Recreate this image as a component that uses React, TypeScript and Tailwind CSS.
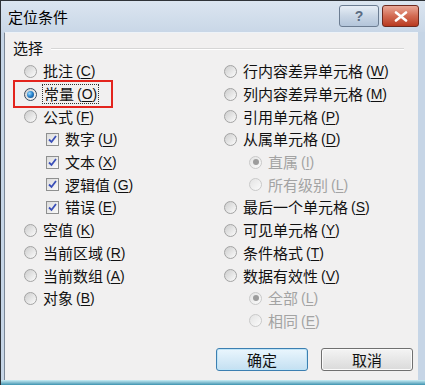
import React from "react";

type Item = {
  label: string;
  key: string;
  kind: "radio" | "check";
  checked?: boolean;
  disabled?: boolean;
  indent?: boolean;
  focus?: boolean;
};

const left: Item[] = [
  { label: "批注", key: "C", kind: "radio" },
  { label: "常量", key: "O", kind: "radio", checked: true, focus: true },
  { label: "公式", key: "F", kind: "radio" },
  { label: "数字", key: "U", kind: "check", checked: true, indent: true },
  { label: "文本", key: "X", kind: "check", checked: true, indent: true },
  { label: "逻辑值", key: "G", kind: "check", checked: true, indent: true },
  { label: "错误", key: "E", kind: "check", checked: true, indent: true },
  { label: "空值", key: "K", kind: "radio" },
  { label: "当前区域", key: "R", kind: "radio" },
  { label: "当前数组", key: "A", kind: "radio" },
  { label: "对象", key: "B", kind: "radio" },
];

const right: Item[] = [
  { label: "行内容差异单元格", key: "W", kind: "radio" },
  { label: "列内容差异单元格", key: "M", kind: "radio" },
  { label: "引用单元格", key: "P", kind: "radio" },
  { label: "从属单元格", key: "D", kind: "radio" },
  { label: "直属", key: "I", kind: "radio", checked: true, disabled: true, indent: true },
  { label: "所有级别", key: "L", kind: "radio", disabled: true, indent: true },
  { label: "最后一个单元格", key: "S", kind: "radio" },
  { label: "可见单元格", key: "Y", kind: "radio" },
  { label: "条件格式", key: "T", kind: "radio" },
  { label: "数据有效性", key: "V", kind: "radio" },
  { label: "全部", key: "L", kind: "radio", checked: true, disabled: true, indent: true },
  { label: "相同", key: "E", kind: "radio", disabled: true, indent: true },
];

function Radio({ checked, disabled }: { checked?: boolean; disabled?: boolean }) {
  if (disabled) {
    return (
      <span className="inline-flex w-[13px] h-[13px] shrink-0 items-center justify-center rounded-full border border-[#c9c9c9] bg-gradient-to-br from-[#e3e3e3] to-[#fbfbfb]">
        {checked && <span className="w-[6px] h-[6px] rounded-full bg-[#9c9c9c]" />}
      </span>
    );
  }
  return (
    <span
      className={
        "inline-flex w-[13px] h-[13px] shrink-0 items-center justify-center rounded-full border bg-gradient-to-br from-[#cdcdcd] to-[#fcfcfc] " +
        (checked ? "border-[#3b4a5c]" : "border-[#a3a3a3]")
      }
    >
      {checked && (
        <span className="w-[7px] h-[7px] rounded-full bg-[radial-gradient(circle_at_35%_35%,#9fdcff_0%,#2a86d0_45%,#0b3f7a_100%)]" />
      )}
    </span>
  );
}

function Check() {
  return (
    <span className="inline-flex w-[13px] h-[13px] shrink-0 items-center justify-center border border-[#8e8f8f] bg-gradient-to-br from-[#dcdcdc] to-[#fafafa]">
      <svg width="9" height="9" viewBox="0 0 9 9">
        <path d="M1 4.5 L3.5 7 L8 1" fill="none" stroke="#3a4fb8" strokeWidth="1.8" />
      </svg>
    </span>
  );
}

function Row({ it, rightCol }: { it: Item; rightCol?: boolean }) {
  const color = it.disabled ? "text-[#a3a3a3]" : "text-[#111]";
  return (
    <div
      className={
        "flex items-center h-[22.7px] " +
        (it.indent ? (rightCol ? "pl-[25px]" : "pl-[22px]") : "")
      }
    >
      {it.kind === "radio" ? <Radio checked={it.checked} disabled={it.disabled} /> : <Check />}
      <span
        className={
          "flex items-center ml-[6px] " +
          color +
          (it.focus ? " outline outline-1 outline-dotted outline-[#333] outline-offset-0 px-[1px]" : "")
        }
      >
        <span className="text-[15px] leading-[18px]">{it.label}</span>
        <span className="ml-[3px] text-[14px] leading-[18px] font-['Liberation_Sans',sans-serif]">
          (<span className="underline underline-offset-2">{it.key}</span>)
        </span>
      </span>
    </div>
  );
}

export default function App() {
  return (
    <div className="w-[425px] h-[385px] overflow-hidden bg-[#c6d5e6] border-t border-l border-[#2f3338] font-['Noto_Sans_CJK_SC',sans-serif] relative">
      {/* title bar */}
      <div className="h-[31px] flex items-start bg-gradient-to-b from-[#dbe5f0] to-[#c9d7e7]">
        <div className="pl-[7px] pt-[6px] text-[15px] leading-[20px] text-black">定位条件</div>
        <div className="ml-auto flex gap-[3px] pt-[4px] pr-[6px]">
          <div className="w-[40px] h-[22px] rounded-[3px] border border-[#6c7d92] bg-gradient-to-b from-[#e7eef6] via-[#c9d6e5] to-[#b3c5da] flex items-center justify-center text-[#5b6c82] text-[14px] font-bold font-['Liberation_Sans',sans-serif] leading-none">
            ?
          </div>
          <div className="w-[37px] h-[22px] rounded-[3px] border border-[#6e2a1f] bg-gradient-to-b from-[#e9a898] via-[#d26a52] to-[#b8391f] flex items-center justify-center">
            <svg width="14" height="11" viewBox="0 0 14 11">
              <path d="M2 1.5 L12 9.5 M12 1.5 L2 9.5" stroke="#fff" strokeWidth="2.6" strokeLinecap="round" />
            </svg>
          </div>
        </div>
      </div>
      {/* body */}
      <div className="ml-[3px] w-[414px] h-[348px] bg-[#f1f0f0] border-l border-[#7b8796] border-t border-t-[#eef3f8] relative">
        <div className="h-[27px] pt-[3px] flex items-center pl-[8px] pr-[14px]">
          <span className="text-[15px] leading-[18px] text-[#111]">选择</span>
          <div className="flex-1 ml-[8px] mt-[2px] h-[2px] border-t border-[#d6d6d6] border-b border-b-white" />
        </div>
        <div className="flex pl-[19px]">
          <div className="w-[200px] flex flex-col">
            {left.map((it, i) => (
              <Row key={i} it={it} />
            ))}
          </div>
          <div className="flex flex-col">
            {right.map((it, i) => (
              <Row key={i} it={it} rightCol />
            ))}
          </div>
        </div>
        <div className="flex justify-end gap-[13px] pr-[5px] mt-[16px]">
          <button className="w-[92px] h-[23px] rounded-[3px] border border-[#3c7fb1] bg-gradient-to-b from-[#eaf6fd] to-[#c4e0f2] text-[15px] leading-none text-[#111] shadow-[inset_0_0_0_1px_#bfe4f7]">
            确定
          </button>
          <button className="w-[92px] h-[23px] rounded-[3px] border border-[#707070] bg-gradient-to-b from-[#f4f4f4] to-[#dadada] text-[15px] leading-none text-[#111] shadow-[inset_0_0_0_1px_#fbfbfb]">
            取消
          </button>
        </div>
        {/* annotation */}
        <div className="absolute left-[8px] top-[47px] w-[100px] h-[28px] border-2 border-[#e3241d] pointer-events-none" />
      </div>
      <div className="h-[5px] bg-gradient-to-b from-[#c9eef5] to-[#3b93b0]" />
    </div>
  );
}
